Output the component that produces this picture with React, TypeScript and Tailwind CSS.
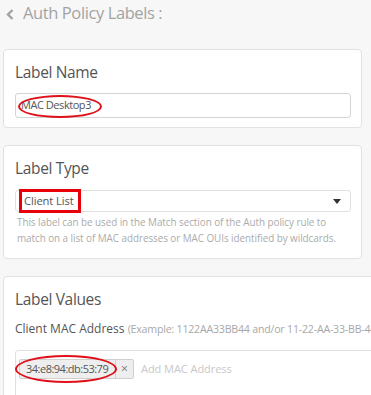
const font = { fontFamily: '"Open Sans", "Noto Sans", sans-serif' };

const Card = ({ title, children, className = "" }: { title: string; children: React.ReactNode; className?: string }) => (
  <div className={`ml-[3px] rounded-[4px] border border-[#e2e2e2] bg-white pl-[11px] pt-[10px] ${className}`}>
    <div className="text-[15.5px] leading-[24px] tracking-[-0.35px] text-[#555]">{title}</div>
    {children}
  </div>
);

export default function App() {
  return (
    <div style={font} className="h-[395px] w-[371px] overflow-hidden bg-[#f7f7f7]">
      {/* header */}
      <div className="flex h-[49px] items-start pl-[6px] pt-[1px] text-[#a3a3a3]">
        <svg className="mt-[8px] h-[11px] w-[8px]" viewBox="0 0 8 11" fill="none" stroke="currentColor">
          <path d="M6.5 1L2 5.5l4.5 4.5" strokeWidth={2.4} />
        </svg>
        <span className="ml-[9px] text-[16.5px] leading-[24px] tracking-[-0.4px]">Auth Policy Labels :</span>
      </div>

      <div className="flex flex-col gap-[17px]">
        {/* Label Name */}
        <Card title="Label Name" className="h-[79px] w-[359px]">
          <div className="relative mt-[9px] flex h-[25px] w-[336px] items-center rounded-[3px] border border-[#d4d4d4] bg-white pl-[5px] text-[11px] tracking-[-0.45px] text-[#555]">
            MAC Desktop3
            <div className="absolute left-[2px] top-[1px] h-[23px] w-[84px] rounded-[50%] border-2 border-[#e0101a]" />
          </div>
        </Card>

        {/* Label Type */}
        <Card title="Label Type" className="h-[114px] w-[359px]">
          <div className="relative mt-[10px] flex h-[22px] w-[336px] items-center justify-between rounded-[3px] border border-[#e0e0e0] bg-white pl-[8px] pr-[9px] text-[11.2px] tracking-[-0.1px] text-[#555]">
            <span>Client List</span>
            <svg className="h-[5px] w-[8px]" viewBox="0 0 8 5">
              <path d="M0 0h8L4 5z" fill="#333" />
            </svg>
            <div className="absolute left-[3px] top-[-2px] h-[24px] w-[62px] border-[3px] border-[#e8000b]" />
          </div>
          <p className="mt-[3px] w-[340px] pl-[2px] text-[9.9px] leading-[15.5px] tracking-[-0.05px] text-[#ababab]">
            This label can be used in the Match section of the Auth policy rule to match on a list of MAC addresses or MAC OUIs identified by wildcards.
          </p>
        </Card>

        {/* Label Values */}
        <Card title="Label Values" className="h-[140px] w-[430px]">
          <div className="mt-[9px] whitespace-nowrap text-[12px] leading-[18px] text-[#555]">
            Client MAC Address{" "}
            <span className="text-[10.6px] tracking-[-0.2px] text-[#a8a8a8]">(Example: 1122AA33BB44 and/or 11-22-AA-33-BB-44)</span>
          </div>
          <div className="mt-[12px] h-[60px] w-[420px] rounded-[3px] border border-[#e0e0e0] bg-white pl-[3px] pt-[8px]">
            <div className="flex items-center">
              <div className="relative flex h-[20px] items-center rounded-[2px] border border-[#cfcfcf] bg-[#eeeeee] text-[#555]">
                <span className="w-[95px] whitespace-nowrap pl-[6px] text-[11px] tracking-[-0.5px]">34:e8:94:db:53:79</span>
                <span className="flex h-full w-[18px] items-center justify-center border-l border-[#cfcfcf] text-[12px] text-[#777]">×</span>
                <div className="absolute left-[-5px] top-[-5px] h-[28px] w-[102px] rounded-[50%] border-2 border-[#e0101a]" />
              </div>
              <span className="ml-[7px] text-[11px] tracking-[-0.05px] text-[#c8c8c8]">Add MAC Address</span>
            </div>
          </div>
        </Card>
      </div>
    </div>
  );
}
